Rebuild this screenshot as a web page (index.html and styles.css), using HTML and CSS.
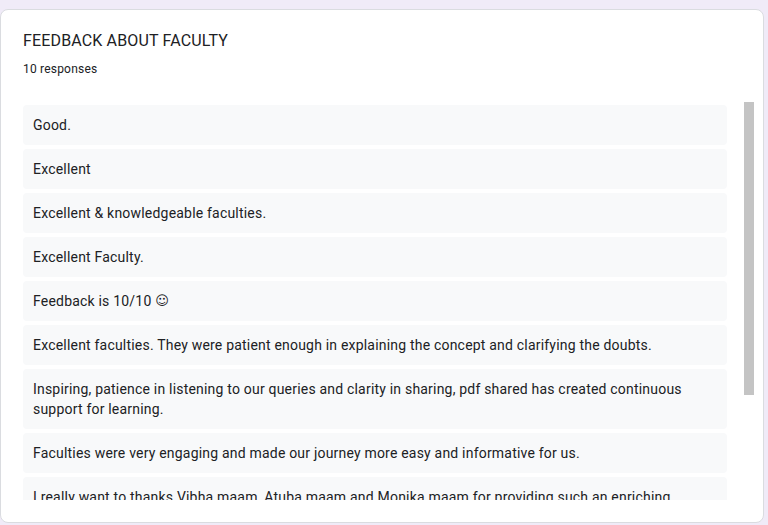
FILE: index.html
```html
<!DOCTYPE html>
<html lang="en">
<head>
<meta charset="utf-8">
<link rel="stylesheet" href="styles.css">
</head>
<body>
<div class="card">
  <div class="title">FEEDBACK ABOUT FACULTY</div>
  <div class="count">10 responses</div>
  <div class="list">
    <div class="scroller">
      <div class="item">Good.</div>
      <div class="item">Excellent</div>
      <div class="item">Excellent &amp; knowledgeable faculties.</div>
      <div class="item">Excellent Faculty.</div>
      <div class="item">Feedback is 10/10 <span class="smile">☺</span></div>
      <div class="item">Excellent faculties. They were patient enough in explaining the concept and clarifying the doubts.</div>
      <div class="item">Inspiring, patience in listening to our queries and clarity in sharing, pdf shared has created continuous support for learning.</div>
      <div class="item">Faculties were very engaging and made our journey more easy and informative for us.</div>
      <div class="item">I really want to thanks Vibha maam, Atuba maam and Monika maam for providing such an enriching experience.</div>
      <div class="item">Very good.</div>
    </div>
    <div class="bar"><div class="thumb"></div></div>
  </div>
</div>
</body>
</html>
```
FILE: styles.css
```css
html, body {
  margin: 0;
  padding: 0;
  background: #f0ebf8;
  font-family: Roboto, "Liberation Sans", Arial, sans-serif;
  color: #202124;
}
body {
  padding: 9px 4px 2px 0;
  height: 525px;
  box-sizing: border-box;
  overflow: hidden;
}
.card {
  background: #ffffff;
  border: 1px solid #dadce0;
  border-radius: 8px;
  height: 514px;
  box-sizing: border-box;
  padding: 19px 9px 0 22px;
}
.title {
  font-size: 16px;
  line-height: 24px;
  letter-spacing: 0.15px;
}
.count {
  font-size: 12px;
  line-height: 16px;
  margin-top: 8px;
  letter-spacing: 0.2px;
}
.list {
  margin-top: 24px;
  height: 399px;
  display: flex;
}
.scroller {
  flex: 1;
  overflow: hidden;
  padding: 4px 17px 0 0;
}
.bar {
  width: 10px;
  background: #ffffff;
  padding-top: 1px;
}
.thumb {
  height: 293px;
  background: #c4c4c4;
}
.item {
  background: #f8f9fa;
  border-radius: 4px;
  padding: 10px;
  font-size: 14px;
  line-height: 20px;
  margin-bottom: 4px;
  letter-spacing: 0.2px;
}
.smile {
  font-family: "DejaVu Sans", sans-serif;
  font-size: 13px;
  line-height: 16px;
  display: inline-block;
  vertical-align: top;
  margin-top: 2px;
}
```
